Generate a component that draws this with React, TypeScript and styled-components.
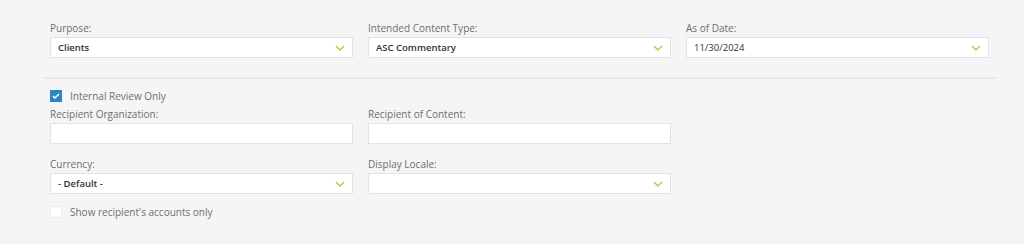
import React from "react";
import styled, { createGlobalStyle } from "styled-components";

const Global = createGlobalStyle`
  html, body { margin: 0; padding: 0; background: #f5f5f5; }
  body { font-family: "Open Sans", "Liberation Sans", sans-serif; }
  * { box-sizing: border-box; }
`;

const Page = styled.div`
  width: 1024px;
  height: 244px;
  background: #f5f5f5;
  padding-top: 21px;
`;

const Grid = styled.div`
  display: grid;
  grid-template-columns: repeat(3, 303px);
  column-gap: 15px;
  padding-left: 50px;
`;

const Field = styled.div<{ $mb?: number }>`
  display: flex;
  flex-direction: column;
  margin-bottom: ${(p) => p.$mb ?? 0}px;
`;

const Label = styled.label`
  font-size: 10px;
  line-height: 14px;
  padding-bottom: 2px;
  color: #6e6e6e;
`;

const Box = styled.div`
  height: 21px;
  background: #fff;
  border: 1px solid #e3e3e3;
  display: flex;
  align-items: center;
  justify-content: space-between;
  padding: 0 7px 0 7px;
`;

const Value = styled.span<{ $bold?: boolean }>`
  font-size: 9.5px;
  font-weight: ${(p) => (p.$bold ? 600 : 400)};
  color: #333;
`;

const Divider = styled.hr`
  border: 0;
  height: 2px;
  background: #e8e8e8;
  margin: 19px 0 0 43px;
  width: 953px;
`;

const Lower = styled.div`
  padding: 11px 0 0 50px;
  display: flex;
  flex-direction: column;
`;

const CheckRow = styled.div<{ $mb?: number; $mt?: number }>`
  display: flex;
  align-items: center;
  gap: 8px;
  height: 12px;
  margin-top: ${(p) => p.$mt ?? 0}px;
  margin-bottom: ${(p) => p.$mb ?? 0}px;
`;

const Check = styled.span<{ $on?: boolean }>`
  width: 12px;
  height: 12px;
  display: flex;
  align-items: center;
  justify-content: center;
  background: ${(p) => (p.$on ? "#2b86c5" : "#fff")};
  border: 1px solid ${(p) => (p.$on ? "#2b86c5" : "#ececec")};
`;

const CheckText = styled.span`
  font-size: 10px;
  color: #6e6e6e;
  line-height: 12px;
`;

const Chevron = () => (
  <svg width="10" height="6" viewBox="0 0 10 6">
    <path d="M1 1 L5 5 L9 1" fill="none" stroke="#a9cc3a" strokeWidth="1.4" />
  </svg>
);

const Select = ({ value, bold }: { value?: string; bold?: boolean }) => (
  <Box>
    <Value $bold={bold}>{value}</Value>
    <Chevron />
  </Box>
);

const Input = () => <Box />;

export default function App() {
  return (
    <Page>
      <Global />
      <Grid>
        <Field>
          <Label>Purpose:</Label>
          <Select value="Clients" bold />
        </Field>
        <Field>
          <Label>Intended Content Type:</Label>
          <Select value="ASC Commentary" bold />
        </Field>
        <Field>
          <Label>As of Date:</Label>
          <Select value="11/30/2024" />
        </Field>
      </Grid>
      <Divider />
      <Lower>
        <CheckRow $mb={5}>
          <Check $on>
            <svg width="8" height="6" viewBox="0 0 8 6">
              <path d="M1 3 L3 5 L7 1" fill="none" stroke="#fff" strokeWidth="1.5" />
            </svg>
          </Check>
          <CheckText>Internal Review Only</CheckText>
        </CheckRow>
      </Lower>
      <Grid>
        <Field $mb={13}>
          <Label>Recipient Organization:</Label>
          <Input />
        </Field>
        <Field $mb={13}>
          <Label>Recipient of Content:</Label>
          <Input />
        </Field>
        <div />
        <Field>
          <Label>Currency:</Label>
          <Select value="- Default -" bold />
        </Field>
        <Field>
          <Label>Display Locale:</Label>
          <Select />
        </Field>
      </Grid>
      <Lower>
        <CheckRow $mt={1}>
          <Check />
          <CheckText>Show recipient's accounts only</CheckText>
        </CheckRow>
      </Lower>
    </Page>
  );
}
